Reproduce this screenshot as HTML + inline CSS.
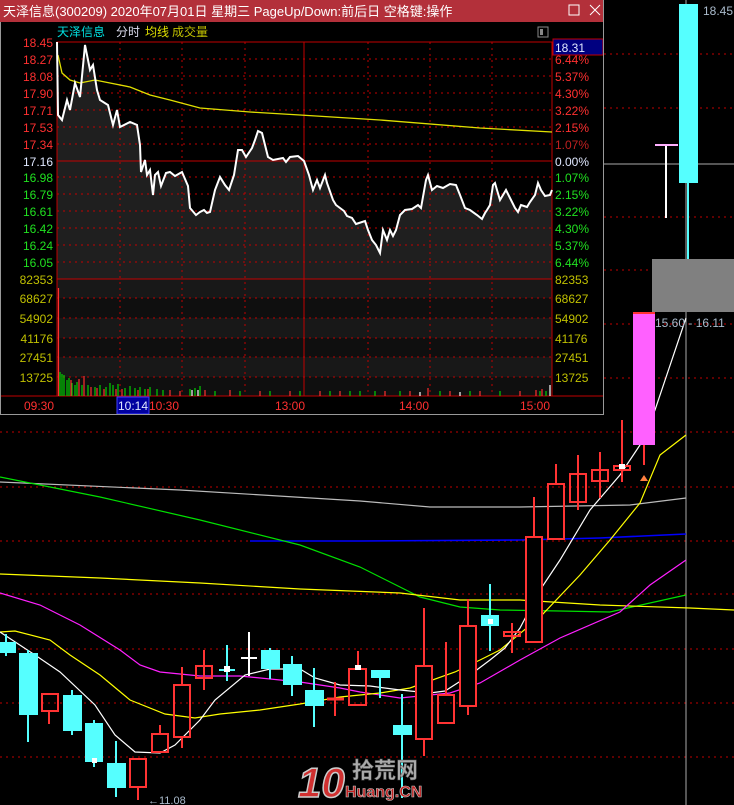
<!DOCTYPE html>
<html><head><meta charset="utf-8"><style>
html,body{margin:0;padding:0;background:#000;}
svg{display:block;font-family:"Liberation Sans","Noto Sans CJK SC",sans-serif;}
</style></head><body>
<svg width="734" height="805" viewBox="0 0 734 805" xmlns="http://www.w3.org/2000/svg">
<rect width="734" height="805" fill="#000"/>
<!-- main chart grid -->
<g stroke="#c00000" stroke-dasharray="2,4" stroke-width="1">
<line x1="604" y1="54" x2="734" y2="54"/><line x1="604" y1="108" x2="734" y2="108"/>
<line x1="604" y1="217" x2="734" y2="217"/><line x1="604" y1="270" x2="734" y2="270"/>
<line x1="604" y1="324" x2="734" y2="324"/><line x1="604" y1="378" x2="734" y2="378"/>
<line x1="0" y1="432" x2="734" y2="432"/><line x1="0" y1="487" x2="734" y2="487"/>
<line x1="0" y1="541" x2="734" y2="541"/><line x1="0" y1="594" x2="734" y2="594"/>
<line x1="0" y1="649" x2="734" y2="649"/><line x1="0" y1="703" x2="734" y2="703"/>
<line x1="0" y1="757" x2="734" y2="757"/>
</g>
<line x1="604" y1="164" x2="734" y2="164" stroke="#aaa"/>
<line x1="686" y1="0" x2="686" y2="805" stroke="#aaa"/>
<!-- MA lines -->
<g fill="none" stroke-width="1.2">
<polyline stroke="#bbb" points="0,482 180,490 360,501 430,507 520,507 630,505 686,498"/>
<polyline stroke="#0000ff" stroke-width="1.6" points="250,541 360,541 520,540 600,538 686,534"/>
<polyline stroke="#00e000" points="0,477 100,497 200,520 300,545 360,567 400,587 420,597 460,607 500,610 560,611 610,612 650,603 686,595"/>
<polyline stroke="#ffff00" points="0,574 100,578 200,583 300,589 400,593 460,600 520,600 600,605 690,608 734,610"/>
<polyline stroke="#ff20ff" points="0,593 40,605 80,625 120,650 140,665 160,672 200,676 240,676 300,682 340,688 360,692 400,698 450,693 480,683 520,660 560,638 620,612 650,585 686,560"/>
<polyline stroke="#ffff00" points="0,632 15,631 50,640 70,655 100,675 130,700 165,714 195,718 220,714 260,710 300,704 340,697 380,693 410,688 455,672 480,660 500,650 540,617 580,575 610,540 640,503 660,455 686,435"/>
<polyline stroke="#fff" points="0,632 35,655 60,672 95,705 115,735 135,752 160,753 175,745 200,720 215,700 245,675 270,669 300,669 315,678 340,685 370,686 400,690 430,693 445,691 470,675 490,660 505,648 520,628 540,590 560,560 590,510 620,475 640,445 655,410 686,318"/>
</g>
<!-- candles -->
<g stroke-width="2">
<g stroke="#55ffff" fill="#55ffff">
<line x1="6" y1="634" x2="6" y2="656"/><rect x="0" y="643" width="15" height="9"/>
<line x1="28" y1="650" x2="28" y2="742"/><rect x="20" y="654" width="17" height="60"/>
<line x1="72" y1="690" x2="72" y2="735"/><rect x="64" y="696" width="17" height="34"/>
<line x1="94" y1="720" x2="94" y2="767"/><rect x="86" y="724" width="16" height="37"/>
<line x1="116" y1="741" x2="116" y2="797"/><rect x="108" y="764" width="17" height="23"/>
<line x1="227" y1="645" x2="227" y2="681"/><line x1="219" y1="670" x2="235" y2="670"/>
<line x1="270" y1="648" x2="270" y2="679"/><rect x="262" y="651" width="17" height="17"/>
<line x1="292" y1="656" x2="292" y2="696"/><rect x="284" y="665" width="17" height="19"/>
<line x1="314" y1="668" x2="314" y2="727"/><rect x="306" y="691" width="17" height="14"/>
<line x1="380" y1="670" x2="380" y2="698"/><rect x="372" y="671" width="17" height="6"/>
<line x1="402" y1="694" x2="402" y2="798"/><rect x="394" y="726" width="17" height="8"/>
<line x1="490" y1="584" x2="490" y2="651"/><rect x="482" y="616" width="16" height="9"/>
<line x1="688" y1="5" x2="688" y2="260"/><rect x="680" y="5" width="17" height="177"/>
</g>
<g stroke="#ff3333" fill="none">
<line x1="49" y1="711" x2="49" y2="724"/><rect x="42" y="694" width="16" height="17"/>
<line x1="138" y1="787" x2="138" y2="800"/><rect x="130" y="759" width="16" height="28"/>
<line x1="160" y1="725" x2="160" y2="734"/><rect x="152" y="734" width="16" height="18"/>
<line x1="182" y1="667" x2="182" y2="685"/><line x1="182" y1="737" x2="182" y2="748"/><rect x="174" y="685" width="16" height="52"/>
<line x1="204" y1="650" x2="204" y2="690"/><rect x="196" y="666" width="16" height="12"/>
<line x1="335" y1="682" x2="335" y2="716"/><line x1="327" y1="699" x2="344" y2="699" stroke-width="3"/>
<line x1="358" y1="651" x2="358" y2="669"/><rect x="349" y="669" width="17" height="36"/>
<line x1="424" y1="608" x2="424" y2="756"/><rect x="416" y="666" width="16" height="73" fill="#000"/>
<line x1="446" y1="642" x2="446" y2="695"/><rect x="438" y="695" width="16" height="28"/>
<line x1="468" y1="599" x2="468" y2="715"/><rect x="460" y="626" width="16" height="80" fill="#000"/>
<line x1="512" y1="623" x2="512" y2="653"/><rect x="504" y="632" width="16" height="4"/>
<line x1="534" y1="497" x2="534" y2="537"/><rect x="526" y="537" width="16" height="105" fill="#000"/>
<line x1="556" y1="464" x2="556" y2="484"/><rect x="548" y="484" width="16" height="55"/>
<line x1="578" y1="455" x2="578" y2="510"/><rect x="570" y="474" width="16" height="28"/>
<line x1="600" y1="452" x2="600" y2="498"/><rect x="592" y="470" width="16" height="11"/>
<line x1="622" y1="420" x2="622" y2="482"/><rect x="614" y="466" width="16" height="4"/>
<line x1="644" y1="440" x2="644" y2="465"/>
</g>
<g stroke="#fff">
<line x1="249" y1="632" x2="249" y2="676"/><line x1="241" y1="658" x2="257" y2="658"/>
<line x1="666" y1="145" x2="666" y2="218"/>
</g>
<line x1="655" y1="145" x2="678" y2="145" stroke="#ffb0ff"/>
</g>
<rect x="224" y="666" width="6" height="6" fill="#fff"/><rect x="488" y="619" width="5" height="5" fill="#fff"/>
<rect x="355" y="665" width="6" height="5" fill="#fff"/><rect x="619" y="464" width="6" height="5" fill="#fff"/>
<rect x="92" y="758" width="5" height="5" fill="#fff"/>
<rect x="633" y="313" width="22" height="132" fill="#ff60ff"/>
<line x1="633" y1="313" x2="655" y2="313" stroke="#ff3333" stroke-width="2"/>
<polygon points="640,481 644,475 648,481" fill="#ff8040"/>
<rect x="652" y="259" width="82" height="53" fill="#808080"/>
<text x="655" y="327" font-size="12" fill="#aabbcc">15.60 - 16.11</text>
<text x="703" y="15" font-size="12" fill="#aabbcc">18.45</text>
<text x="148" y="804" font-size="11" fill="#aabbcc">←11.08</text>
<!-- logo -->
<g font-weight="bold">
<text x="298" y="797" font-size="42" fill="#d03030" stroke="#ccc" stroke-width="1.5" font-style="italic">10</text>
<text x="352" y="778" font-size="22" fill="#aaa" stroke="#555" stroke-width="0.5" font-family="'Noto Sans CJK SC',sans-serif">拾荒网</text>
<text x="345" y="797" font-size="16" fill="#c02020" stroke="#ccc" stroke-width="0.6">Huang.CN</text>
</g>
<!-- popup -->
<rect x="0" y="0" width="604" height="415" fill="#000"/>
<rect x="0" y="0" width="604" height="22" fill="#b3303a"/>
<text x="3" y="16" font-size="13" fill="#fff">天泽信息(300209) 2020年07月01日 星期三 PageUp/Down:前后日 空格键:操作</text>
<rect x="569" y="5" width="10" height="10" fill="none" stroke="#fff"/>
<path d="M590 5 L600 15 M600 5 L590 15" stroke="#fff"/>
<rect x="538" y="27" width="10" height="10" fill="none" stroke="#888"/><rect x="540" y="29" width="3" height="6" fill="#888"/>
<text x="57" y="36" font-size="12" fill="#00e0e0">天泽信息</text>
<text x="116" y="36" font-size="12" fill="#dde">分时</text>
<text x="145" y="36" font-size="12" fill="#e0e000">均线</text>
<text x="172" y="36" font-size="12" fill="#c0c000">成交量</text>
<!-- shading -->
<g fill="#0f0f0f"><rect x="57" y="279" width="495" height="117"/></g>
<g fill="#181818"><rect x="57" y="279" width="495" height="19"/><rect x="57" y="318" width="495" height="20"/><rect x="57" y="357" width="495" height="20"/></g>
<polygon fill="#1f1f1f" points="57,42 58,115 62,120 67,100 70,110 75,83 80,97 85,45 90,70 93,65 97,90 100,100 108,105 113,125 117,110 120,127 130,122 137,125 140,145 141,172 145,160 147,175 150,170 153,195 155,175 158,172 161,186 166,173 170,172 175,176 182,172 188,186 190,208 196,215 200,212 204,210 207,213 210,212 215,190 220,177 225,185 229,190 234,175 238,150 242,150 246,157 252,148 255,140 258,131 262,133 268,157 273,160 283,158 286,162 290,157 298,156 304,161 309,175 313,190 317,180 320,188 325,175 327,183 333,200 336,205 344,211 347,216 352,218 356,224 365,221 368,230 372,240 376,245 380,253 383,230 387,240 390,230 393,236 396,230 400,215 405,210 412,209 418,205 421,208 426,180 428,175 432,190 437,186 443,188 450,184 456,185 460,195 465,208 470,210 477,215 482,219 485,213 487,210 490,205 493,185 495,183 497,190 500,200 503,195 506,190 510,198 515,208 518,212 521,205 527,207 530,202 535,195 538,183 541,190 545,196 550,195 552,190 552,279 57,279"/>
<g stroke="#c00000" stroke-dasharray="2,4">
<line x1="57" y1="59" x2="552" y2="59"/><line x1="57" y1="76" x2="552" y2="76"/><line x1="57" y1="93" x2="552" y2="93"/>
<line x1="57" y1="110" x2="552" y2="110"/><line x1="57" y1="127" x2="552" y2="127"/><line x1="57" y1="144" x2="552" y2="144"/>
<line x1="57" y1="177" x2="552" y2="177"/><line x1="57" y1="194" x2="552" y2="194"/><line x1="57" y1="211" x2="552" y2="211"/>
<line x1="57" y1="228" x2="552" y2="228"/><line x1="57" y1="245" x2="552" y2="245"/><line x1="57" y1="262" x2="552" y2="262"/>
<line x1="57" y1="298" x2="552" y2="298"/><line x1="57" y1="318" x2="552" y2="318"/><line x1="57" y1="338" x2="552" y2="338"/>
<line x1="57" y1="357" x2="552" y2="357"/><line x1="57" y1="377" x2="552" y2="377"/>
<line x1="120" y1="42" x2="120" y2="396"/><line x1="182" y1="42" x2="182" y2="396"/><line x1="245" y1="42" x2="245" y2="396"/>
<line x1="368" y1="42" x2="368" y2="396"/><line x1="430" y1="42" x2="430" y2="396"/><line x1="492" y1="42" x2="492" y2="396"/>
</g>
<g stroke="#c00000" fill="none">
<rect x="57" y="42" width="495" height="354"/>
<line x1="57" y1="161" x2="552" y2="161"/><line x1="57" y1="279" x2="552" y2="279"/>
<line x1="304" y1="42" x2="304" y2="396"/>
<line x1="0" y1="396" x2="603" y2="396"/>
</g>
<!-- volume -->
<g stroke-width="1.2">
<line x1="58.5" y1="288" x2="58.5" y2="396" stroke="#ff3030"/>
<path stroke="#00d000" d="M60 372V396M62 374V396M64 375V396M67 380V396M69 378V396M72 383V396M75 385V396M77 382V396M82 385V396M88 385V396M95 387V396M100 385V396M106 387V396M110 383V396M113 385V396M118 384V396M125 388V396M130 386V396M135 388V396M140 387V396M145 389V396M150 387V396M157 389V396M163 390V396M190 389V396M195 388V396M200 386V396M215 391V396M240 391V396M270 391V396M300 391V396M330 391V396M350 391V396M360 391V396M375 391V396M400 391V396M440 391V396M470 391V396M500 391V396M540 391V396M546 391V396"/>
<path stroke="#ff3030" d="M71 380V396M79 379V396M84 376V396M91 387V396M97 388V396M104 389V396M116 389V396M122 389V396M138 390V396M148 389V396M170 390V396M180 391V396M205 390V396M230 390V396M260 391V396M290 391V396M320 391V396M340 391V396M385 391V396M410 391V396M428 388V396M450 391V396M480 391V396M520 391V396M536 390V396M542 389V396"/>
<path stroke="#fff" d="M192 390V396M198 390V396M420 392V396M460 392V396M550 385V396"/>
</g>
<!-- lines -->
<polyline fill="none" stroke="#e0e000" stroke-width="1.3" points="58,55 62,73 70,80 80,83 95,80 110,83 130,87 150,95 170,100 200,108 250,112 300,115 380,120 480,128 552,132"/>
<polyline fill="none" stroke="#fff" stroke-width="2" points="57,42 58,115 62,120 67,100 70,110 75,83 80,97 85,45 90,70 93,65 97,90 100,100 108,105 113,125 117,110 120,127 130,122 137,125 140,145 141,172 145,160 147,175 150,170 153,195 155,175 158,172 161,186 166,173 170,172 175,176 182,172 188,186 190,208 196,215 200,212 204,210 207,213 210,212 215,190 220,177 225,185 229,190 234,175 238,150 242,150 246,157 252,148 255,140 258,131 262,133 268,157 273,160 283,158 286,162 290,157 298,156 304,161 309,175 313,190 317,180 320,188 325,175 327,183 333,200 336,205 344,211 347,216 352,218 356,224 365,221 368,230 372,240 376,245 380,253 383,230 387,240 390,230 393,236 396,230 400,215 405,210 412,209 418,205 421,208 426,180 428,175 432,190 437,186 443,188 450,184 456,185 460,195 465,208 470,210 477,215 482,219 485,213 487,210 490,205 493,185 495,183 497,190 500,200 503,195 506,190 510,198 515,208 518,212 521,205 527,207 530,202 535,195 538,183 541,190 545,196 550,195 552,190"/>
<!-- left axis -->
<g font-size="12" text-anchor="end">
<g fill="#ff3030"><text x="53" y="47">18.45</text><text x="53" y="64">18.27</text><text x="53" y="81">18.08</text><text x="53" y="98">17.90</text><text x="53" y="115">17.71</text><text x="53" y="132">17.53</text><text x="53" y="149">17.34</text></g>
<text x="53" y="166" fill="#e0e8ff">17.16</text>
<g fill="#20e020"><text x="53" y="182">16.98</text><text x="53" y="199">16.79</text><text x="53" y="216">16.61</text><text x="53" y="233">16.42</text><text x="53" y="250">16.24</text><text x="53" y="267">16.05</text></g>
<g fill="#c0c000"><text x="53" y="284">82353</text><text x="53" y="303">68627</text><text x="53" y="323">54902</text><text x="53" y="343">41176</text><text x="53" y="362">27451</text><text x="53" y="382">13725</text></g>
</g>
<!-- right axis -->
<g font-size="12">
<g fill="#ff3030"><text x="555" y="64">6.44%</text><text x="555" y="81">5.37%</text><text x="555" y="98">4.30%</text><text x="555" y="115">3.22%</text><text x="555" y="132">2.15%</text></g>
<text x="555" y="149" fill="#c02020">1.07%</text>
<text x="555" y="166" fill="#e0e8ff">0.00%</text>
<g fill="#20e020"><text x="555" y="182">1.07%</text><text x="555" y="199">2.15%</text><text x="555" y="216">3.22%</text><text x="555" y="233">4.30%</text><text x="555" y="250">5.37%</text><text x="555" y="267">6.44%</text></g>
<g fill="#c0c000"><text x="555" y="284">82353</text><text x="555" y="303">68627</text><text x="555" y="323">54902</text><text x="555" y="343">41176</text><text x="555" y="362">27451</text><text x="555" y="382">13725</text></g>
<rect x="553" y="39" width="50" height="16" fill="#000080" stroke="#c00000"/>
<text x="555" y="52" fill="#e0e8ff">18.31</text>
</g>
<!-- time axis -->
<g font-size="12" fill="#ff3030">
<text x="24" y="410">09:30</text><text x="149" y="410">10:30</text><text x="275" y="410">13:00</text><text x="399" y="410">14:00</text><text x="520" y="410">15:00</text>
</g>
<rect x="117" y="397" width="32" height="17" fill="#0000a0" stroke="#4040ff"/>
<text x="118" y="410" font-size="12" fill="#e0e8ff">10:14</text>
<line x1="0" y1="414.5" x2="604" y2="414.5" stroke="#999"/>
<line x1="603.5" y1="0" x2="603.5" y2="415" stroke="#999"/>
<line x1="0.5" y1="22" x2="0.5" y2="415" stroke="#999"/>
</svg>
</body></html>
